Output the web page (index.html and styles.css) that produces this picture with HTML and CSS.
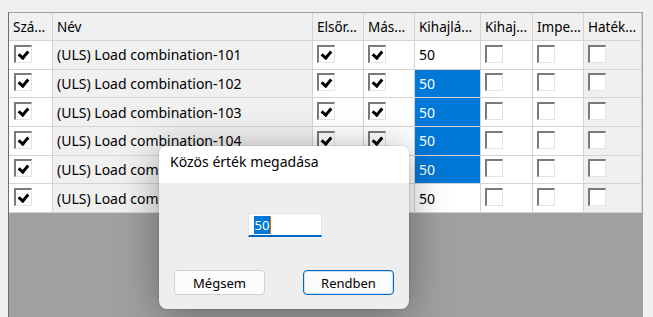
FILE: index.html
```html
<!DOCTYPE html>
<html>
<head>
<meta charset="utf-8">
<link rel="stylesheet" href="styles.css">
</head>
<body>
<div class="page">
  <div class="grid">
    <div class="row head">
      <div class="c c1">Szá...</div>
      <div class="c c2">Név</div>
      <div class="c c3">Elsőr...</div>
      <div class="c c4">Más...</div>
      <div class="c c5">Kihajlá...</div>
      <div class="c c6">Kihaj...</div>
      <div class="c c7">Impe...</div>
      <div class="c c8">Haték...</div>
    </div>
    <div class="row">
      <div class="c c1"><span class="cb on"></span></div>
      <div class="c c2 ro">(ULS) Load combination-101</div>
      <div class="c c3"><span class="cb on"></span></div>
      <div class="c c4"><span class="cb on"></span></div>
      <div class="c c5">50</div>
      <div class="c c6"><span class="cb"></span></div>
      <div class="c c7"><span class="cb"></span></div>
      <div class="c c8 ro"><span class="cb"></span></div>
    </div>
    <div class="row">
      <div class="c c1"><span class="cb on"></span></div>
      <div class="c c2 ro">(ULS) Load combination-102</div>
      <div class="c c3"><span class="cb on"></span></div>
      <div class="c c4"><span class="cb on"></span></div>
      <div class="c c5 sel">50</div>
      <div class="c c6"><span class="cb"></span></div>
      <div class="c c7"><span class="cb"></span></div>
      <div class="c c8 ro"><span class="cb"></span></div>
    </div>
    <div class="row">
      <div class="c c1"><span class="cb on"></span></div>
      <div class="c c2 ro">(ULS) Load combination-103</div>
      <div class="c c3"><span class="cb on"></span></div>
      <div class="c c4"><span class="cb on"></span></div>
      <div class="c c5 sel">50</div>
      <div class="c c6"><span class="cb"></span></div>
      <div class="c c7"><span class="cb"></span></div>
      <div class="c c8 ro"><span class="cb"></span></div>
    </div>
    <div class="row">
      <div class="c c1"><span class="cb on"></span></div>
      <div class="c c2 ro">(ULS) Load combination-104</div>
      <div class="c c3"><span class="cb on"></span></div>
      <div class="c c4"><span class="cb on"></span></div>
      <div class="c c5 sel">50</div>
      <div class="c c6"><span class="cb"></span></div>
      <div class="c c7"><span class="cb"></span></div>
      <div class="c c8 ro"><span class="cb"></span></div>
    </div>
    <div class="row">
      <div class="c c1"><span class="cb on"></span></div>
      <div class="c c2 ro">(ULS) Load combination-105</div>
      <div class="c c3"><span class="cb on"></span></div>
      <div class="c c4"><span class="cb on"></span></div>
      <div class="c c5 sel">50</div>
      <div class="c c6"><span class="cb"></span></div>
      <div class="c c7"><span class="cb"></span></div>
      <div class="c c8 ro"><span class="cb"></span></div>
    </div>
    <div class="row">
      <div class="c c1"><span class="cb on"></span></div>
      <div class="c c2 ro">(ULS) Load combination-106</div>
      <div class="c c3"><span class="cb on"></span></div>
      <div class="c c4"><span class="cb on"></span></div>
      <div class="c c5">50</div>
      <div class="c c6"><span class="cb"></span></div>
      <div class="c c7"><span class="cb"></span></div>
      <div class="c c8 ro"><span class="cb"></span></div>
    </div>
  </div>

  <div class="dialog">
    <div class="dtitle">Közös érték megadása</div>
    <div class="dbody">
      <div class="inputrow">
        <div class="input"><span class="seltext">50</span><span class="caret"></span></div>
      </div>
      <div class="buttons">
        <button class="btn">Mégsem</button>
        <button class="btn primary">Rendben</button>
      </div>
    </div>
  </div>
</div>
</body>
</html>
```

FILE: styles.css
```css
* { box-sizing: border-box; }
html, body {
  margin: 0;
  padding: 0;
  width: 653px;
  height: 317px;
  overflow: hidden;
  background: #f0f0f0;
  font-family: "Noto Sans", "Open Sans", sans-serif;
  font-size: 14px;
  color: #000;
}
.page {
  position: relative;
  height: 317px;
  padding: 12px 10px 0 8px;
}
.grid {
  height: 305px;
  background: #a0a0a0;
  border-left: 1px solid #6d6d6d;
  border-top: 1px solid #a0a0a0;
}
.row {
  display: flex;
  height: 28.67px;
}
.row.head {
  height: 28px;
}
.c {
  flex: none;
  height: 100%;
  border-right: 1px solid #d4d4d4;
  border-bottom: 1px solid #d4d4d4;
  background: #fff;
  display: flex;
  align-items: center;
  padding-left: 4px;
  white-space: nowrap;
  overflow: hidden;
}
.head .c {
  background: #f0f0f0;
  padding-left: 4px;
  font-size: 13.5px;
}
.c1 { width: 44px; }
.c2 { width: 260px; }
.c3 { width: 51px; }
.c4 { width: 51px; }
.c5 { width: 66px; }
.c6 { width: 52px; }
.c7 { width: 51px; }
.c8 { width: 58px; }
.ro { background: #f0f0f0; }
.sel {
  background: #0078d7;
  color: #fff;
}
.cb {
  display: block;
  width: 18px;
  height: 18px;
  margin-top: -2px;
  background: #fff;
  border-style: solid;
  border-width: 2px 1px 1px 2px;
  border-color: #7a7a7a #e3e3e3 #e3e3e3 #7a7a7a;
  position: relative;
}
.c1 .cb { margin-left: 1px; }
.cb.on::after {
  content: "";
  position: absolute;
  left: 4px;
  top: 2px;
  width: 4px;
  height: 7px;
  border-right: 3px solid #000;
  border-bottom: 3px solid #000;
  transform: rotate(40deg);
}

.dialog {
  position: absolute;
  left: 159px;
  top: 146px;
  width: 250px;
  height: 163px;
  border-radius: 8px;
  background: #eeeeee;
  box-shadow: 0 6px 40px rgba(0, 0, 0, 0.35), 0 0 0 1px rgba(0,0,0,0.08);
  overflow: hidden;
  display: flex;
  flex-direction: column;
}
.dtitle {
  height: 37px;
  background: #fff;
  font-size: 14px;
  padding: 6px 0 0 11px;
}
.dbody {
  flex: 1;
  display: flex;
  flex-direction: column;
  padding: 30px 15px 14px 15px;
}
.inputrow {
  display: flex;
  justify-content: center;
  padding-left: 1px;
}
.input {
  width: 74px;
  height: 24px;
  background: #fff;
  border: 1px solid #e2e2e2;
  border-bottom: 2px solid #0067c0;
  display: flex;
  align-items: center;
  padding-left: 5px;
}
.seltext {
  background: #0078d7;
  color: #fff;
  font-size: 13px;
  line-height: 18px;
  padding: 0 1px;
}
.caret {
  width: 1px;
  height: 18px;
  background: #e07000;
}
.buttons {
  margin-top: auto;
  display: flex;
  justify-content: space-between;
}
.btn {
  width: 91px;
  height: 25px;
  border: 1px solid #d0d0d0;
  border-radius: 4px;
  background: #fbfbfb;
  font-family: "Noto Sans", "Open Sans", sans-serif;
  font-size: 13px;
  color: #000;
  padding: 0;
}
.btn.primary {
  border: 1px solid #0067c0;
  box-shadow: inset 0 0 0 1px #cfe2f5;
}
```
